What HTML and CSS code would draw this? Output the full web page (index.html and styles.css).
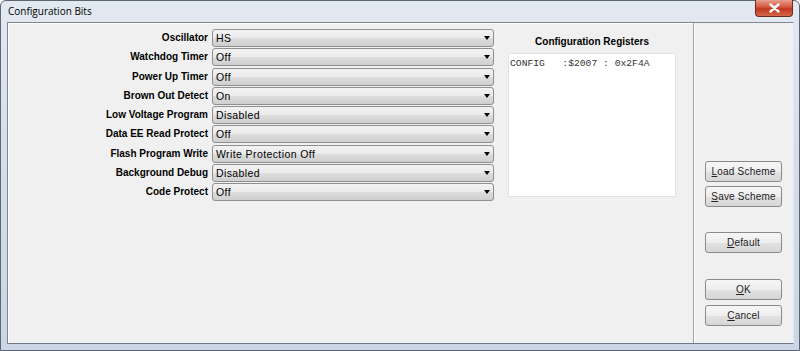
FILE: index.html
```html
<!DOCTYPE html>
<html lang="en">
<head>
    <meta charset="UTF-8">
    <title>Configuration Bits</title>
    <link rel="stylesheet" href="styles.css">
</head>
<body>
    <div class="window">
        <div class="titlebar">
            <span class="title">Configuration Bits</span>
            <div class="close">
                <svg width="11" height="10" viewBox="0 0 11 10"><path d="M1.5 1.5 L9.5 8.5 M9.5 1.5 L1.5 8.5" stroke="#fff" stroke-width="2.4" stroke-linecap="round"/></svg>
            </div>
        </div>
        <div class="client">
            <div class="main">
                <div class="fields">
                    <label>Oscillator</label><div class="combo">HS</div>
                    <label>Watchdog Timer</label><div class="combo">Off</div>
                    <label>Power Up Timer</label><div class="combo">Off</div>
                    <label>Brown Out Detect</label><div class="combo">On</div>
                    <label>Low Voltage Program</label><div class="combo">Disabled</div>
                    <label>Data EE Read Protect</label><div class="combo">Off</div>
                    <label>Flash Program Write</label><div class="combo">Write Protection Off</div>
                    <label>Background Debug</label><div class="combo">Disabled</div>
                    <label>Code Protect</label><div class="combo">Off</div>
                </div>
                <div class="registers">
                    <div class="reg-title">Configuration Registers</div>
                    <div class="reg-box">CONFIG   :$2007 : 0x2F4A</div>
                </div>
            </div>
            <div class="side">
                <button><u>L</u>oad Scheme</button>
                <button class="b-save"><u>S</u>ave Scheme</button>
                <button class="b-default"><u>D</u>efault</button>
                <button class="b-ok"><u>O</u>K</button>
                <button class="b-cancel"><u>C</u>ancel</button>
            </div>
        </div>
    </div>
</body>
</html>
```

FILE: styles.css
```css
body {
    margin: 0;
    padding: 0;
    font-family: "Liberation Sans", Arial, sans-serif;
    font-size: 11px;
    background: #fff;
}
.window {
    width: 800px;
    height: 351px;
    box-sizing: border-box;
    border: 1px solid #5b6573;
    border-radius: 6px 6px 0 0;
    background: linear-gradient(to bottom, #e3e9f1 0%, #d6dfea 40%, #cad6e4 100%);
    padding: 0 5px 6px 6px;
    display: flex;
    flex-direction: column;
}
.titlebar {
    height: 21px;
    display: flex;
    align-items: flex-start;
    justify-content: space-between;
}
.title {
    font-family: "Open Sans", "Noto Sans", sans-serif;
    font-size: 10px;
    color: #000;
    padding: 3px 0 0 1px;
    line-height: 15px;
}
.close {
    width: 38px;
    height: 17px;
    margin-top: -1px;
    margin-right: 1px;
    box-sizing: border-box;
    border: 1px solid #6d2a22;
    border-top: none;
    border-radius: 0 0 4px 4px;
    background: linear-gradient(to bottom, #e8a08f 0%, #d5553d 45%, #c2361f 55%, #d4674a 100%);
    display: flex;
    align-items: center;
    justify-content: center;
}
.client {
    flex: 1;
    display: flex;
    background: #f0f0f0;
    border: 1px solid #828790;
    border-right-color: #e3e7ee;
    border-bottom-color: #6f7a88;
}
.main {
    width: 685px;
    display: flex;
    border-right: 1px solid #a0a0a0;
    box-shadow: inset 1px 1px 0 #fff;
}
.fields {
    display: grid;
    grid-template-columns: 200px 282px;
    column-gap: 4px;
    grid-auto-rows: 18px;
    row-gap: 1.25px;
    padding-top: 6px;
    align-content: start;
}
.fields label {
    font-size: 10px;
    font-weight: bold;
    text-align: right;
    line-height: 18px;
    color: #000;
}
.combo {
    position: relative;
    box-sizing: border-box;
    border: 1px solid #8e8f8f;
    border-radius: 3px;
    background: linear-gradient(to bottom, #f2f2f2 0%, #ebebeb 50%, #dddddd 51%, #cfcfcf 100%);
    line-height: 16px;
    padding-left: 3px;
    font-size: 10.5px;
    letter-spacing: 0.4px;
    color: #000;
}
.combo::after {
    content: "";
    position: absolute;
    right: 3px;
    top: 6px;
    border-left: 3.5px solid transparent;
    border-right: 3.5px solid transparent;
    border-top: 4px solid #000;
}
.registers {
    margin-left: 14px;
    width: 168px;
    padding-top: 12px;
}
.reg-title {
    font-size: 10px;
    font-weight: bold;
    text-align: center;
    line-height: 14px;
    margin-bottom: 4px;
}
.reg-box {
    height: 144px;
    box-sizing: border-box;
    background: #fff;
    border: 1px solid #e3e3e3;
    font-family: "Liberation Mono", "Courier New", monospace;
    font-size: 9.7px;
    white-space: pre;
    padding: 3px 1px;
    line-height: 13px;
    color: #333;
}
.side {
    flex: 1;
    display: flex;
    flex-direction: column;
    align-items: flex-start;
    padding: 138px 0 0 11px;
    box-shadow: inset 1px 0 0 #fff;
}
button {
    width: 77px;
    height: 21px;
    font-family: "Liberation Sans", Arial, sans-serif;
    font-size: 10px;
    letter-spacing: 0.2px;
    color: #222;
    border: 1px solid #8a8a8a;
    border-radius: 3px;
    background: linear-gradient(to bottom, #f6f6f6 0%, #eeeeee 50%, #e2e2e2 51%, #d6d6d6 100%);
    padding: 0;
}
.b-save {
    margin-top: 4px;
}
.b-default {
    margin-top: 25px;
}
.b-ok {
    margin-top: 26px;
}
.b-cancel {
    margin-top: 5px;
}
```
